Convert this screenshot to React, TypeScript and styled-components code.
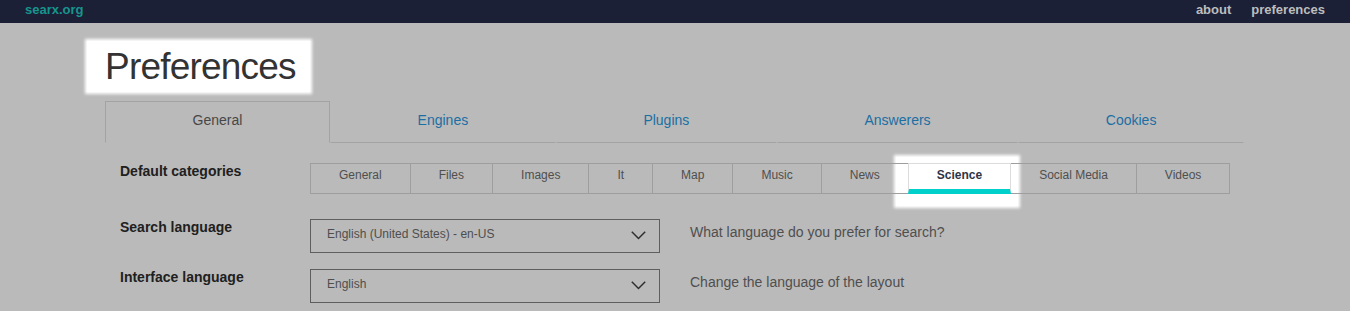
import React from "react";
import styled, { createGlobalStyle } from "styled-components";

const GlobalStyle = createGlobalStyle`
  body {
    margin: 0;
    padding: 0;
    background: #bababa;
    font-family: "Liberation Sans", Arial, sans-serif;
  }
  * { box-sizing: border-box; }
`;

const NavBar = styled.header`
  display: flex;
  justify-content: space-between;
  align-items: flex-start;
  height: 23px;
  padding: 0 25px;
  background: #1b2037;
`;

const Brand = styled.a`
  font-size: 13px;
  font-weight: 700;
  line-height: 19px;
  color: #17958d;
  text-decoration: none;
`;

const NavLinks = styled.nav`
  display: flex;
  gap: 20px;
`;

const NavLink = styled.a`
  font-size: 13px;
  font-weight: 700;
  line-height: 19px;
  color: #bdbdbd;
  text-decoration: none;
`;

const Main = styled.main`
  padding: 0 106px 0 105px;
`;

const Title = styled.h1`
  width: fit-content;
  height: 51px;
  margin: 18px 0 9px -18px;
  padding: 0 14px 0 18px;
  font-size: 37px;
  font-weight: 400;
  letter-spacing: -0.8px;
  line-height: 51px;
  color: #333;
  background: #fff;
  box-shadow: 0 0 3px 2px #fff;
`;

const Tabs = styled.div`
  display: flex;
`;

const Tab = styled.div<{ $active?: boolean }>`
  flex: 1 1 auto;
  height: 42px;
  padding-bottom: 4px;
  text-align: center;
  font-size: 14px;
  line-height: 36px;
  border: 1px solid transparent;
  border-bottom-color: ${(p) => (p.$active ? "transparent" : "#a3a3a3")};
  ${(p) =>
    p.$active &&
    `border-top-color: #a3a3a3; border-left-color: #a3a3a3; border-right-color: #a3a3a3;`}
  color: ${(p) => (p.$active ? "#474747" : "#1b6fa3")};
`;

const Panel = styled.section`
  padding: 20px 14px 0 15px;
`;

const Row = styled.div<{ $space: number }>`
  display: flex;
  align-items: flex-start;
  margin-bottom: ${(p) => p.$space}px;
`;

const Label = styled.div`
  width: 190px;
  flex: none;
  font-size: 14px;
  font-weight: 700;
  line-height: 16px;
  color: #202020;
`;

const Categories = styled.div`
  display: flex;
  border-left: 1px solid #9e9e9e;
`;

const Category = styled.div<{ $active?: boolean }>`
  position: relative;
  height: 31px;
  padding: 3px 28px 0;
  font-size: 12px;
  line-height: 16px;
  white-space: nowrap;
  color: ${(p) => (p.$active ? "#2f3446" : "#4f4f4f")};
  font-weight: ${(p) => (p.$active ? 700 : 400)};
  background: ${(p) => (p.$active ? "#fff" : "transparent")};
  border-top: 1px solid ${(p) => (p.$active ? "#dcdcdc" : "#9e9e9e")};
  border-right: 1px solid ${(p) => (p.$active ? "#dcdcdc" : "#9e9e9e")};
  border-bottom: ${(p) => (p.$active ? "5px solid #00d0cc" : "1px solid #9e9e9e")};
  ${(p) =>
    p.$active &&
    `
    margin-left: -1px;
    border-left: 1px solid #dcdcdc;
    &::before {
      content: "";
      position: absolute;
      top: -7px;
      left: -13px;
      right: -8px;
      bottom: -17px;
      z-index: -1;
      background: #fff;
      box-shadow: 0 0 3px 2px #fff;
    }
  `}
`;

const Select = styled.div`
  display: flex;
  justify-content: space-between;
  align-items: flex-start;
  width: 350px;
  height: 34px;
  flex: none;
  padding: 0 13px 0 16px;
  border: 1px solid #5e5e5e;
`;

const SelectText = styled.span`
  padding-top: 5.5px;
  font-size: 12px;
  line-height: 16px;
  color: #4e4e4e;
`;

const Chevron = styled.svg`
  margin-top: 11px;
  flex: none;
`;

const Description = styled.div`
  margin-left: 30px;
  padding-top: 5px;
  font-size: 14px;
  line-height: 16px;
  color: #4f4f4f;
`;

const ChevronIcon = () => (
  <Chevron width="15" height="9" viewBox="0 0 15 9" aria-hidden="true">
    <polyline points="0.8,0.8 7.5,7.5 14.2,0.8" fill="none" stroke="#2e2e2e" strokeWidth="1.5" />
  </Chevron>
);

const categories = ["General", "Files", "Images", "It", "Map", "Music", "News", "Science", "Social Media", "Videos"];
const tabs = ["General", "Engines", "Plugins", "Answerers", "Cookies"];

export default function App() {
  return (
    <>
      <GlobalStyle />
      <NavBar>
        <Brand>searx.org</Brand>
        <NavLinks>
          <NavLink>about</NavLink>
          <NavLink>preferences</NavLink>
        </NavLinks>
      </NavBar>
      <Main>
        <Title>Preferences</Title>
        <Tabs>
          {tabs.map((t, i) => (
            <Tab key={t} $active={i === 0}>
              {t}
            </Tab>
          ))}
        </Tabs>
        <Panel>
          <Row $space={25}>
            <Label>Default categories</Label>
            <Categories>
              {categories.map((c) => (
                <Category key={c} $active={c === "Science"}>
                  {c}
                </Category>
              ))}
            </Categories>
          </Row>
          <Row $space={16}>
            <Label>Search language</Label>
            <Select>
              <SelectText>English (United States) - en-US</SelectText>
              <ChevronIcon />
            </Select>
            <Description>What language do you prefer for search?</Description>
          </Row>
          <Row $space={16}>
            <Label>Interface language</Label>
            <Select>
              <SelectText>English</SelectText>
              <ChevronIcon />
            </Select>
            <Description>Change the language of the layout</Description>
          </Row>
        </Panel>
      </Main>
    </>
  );
}
